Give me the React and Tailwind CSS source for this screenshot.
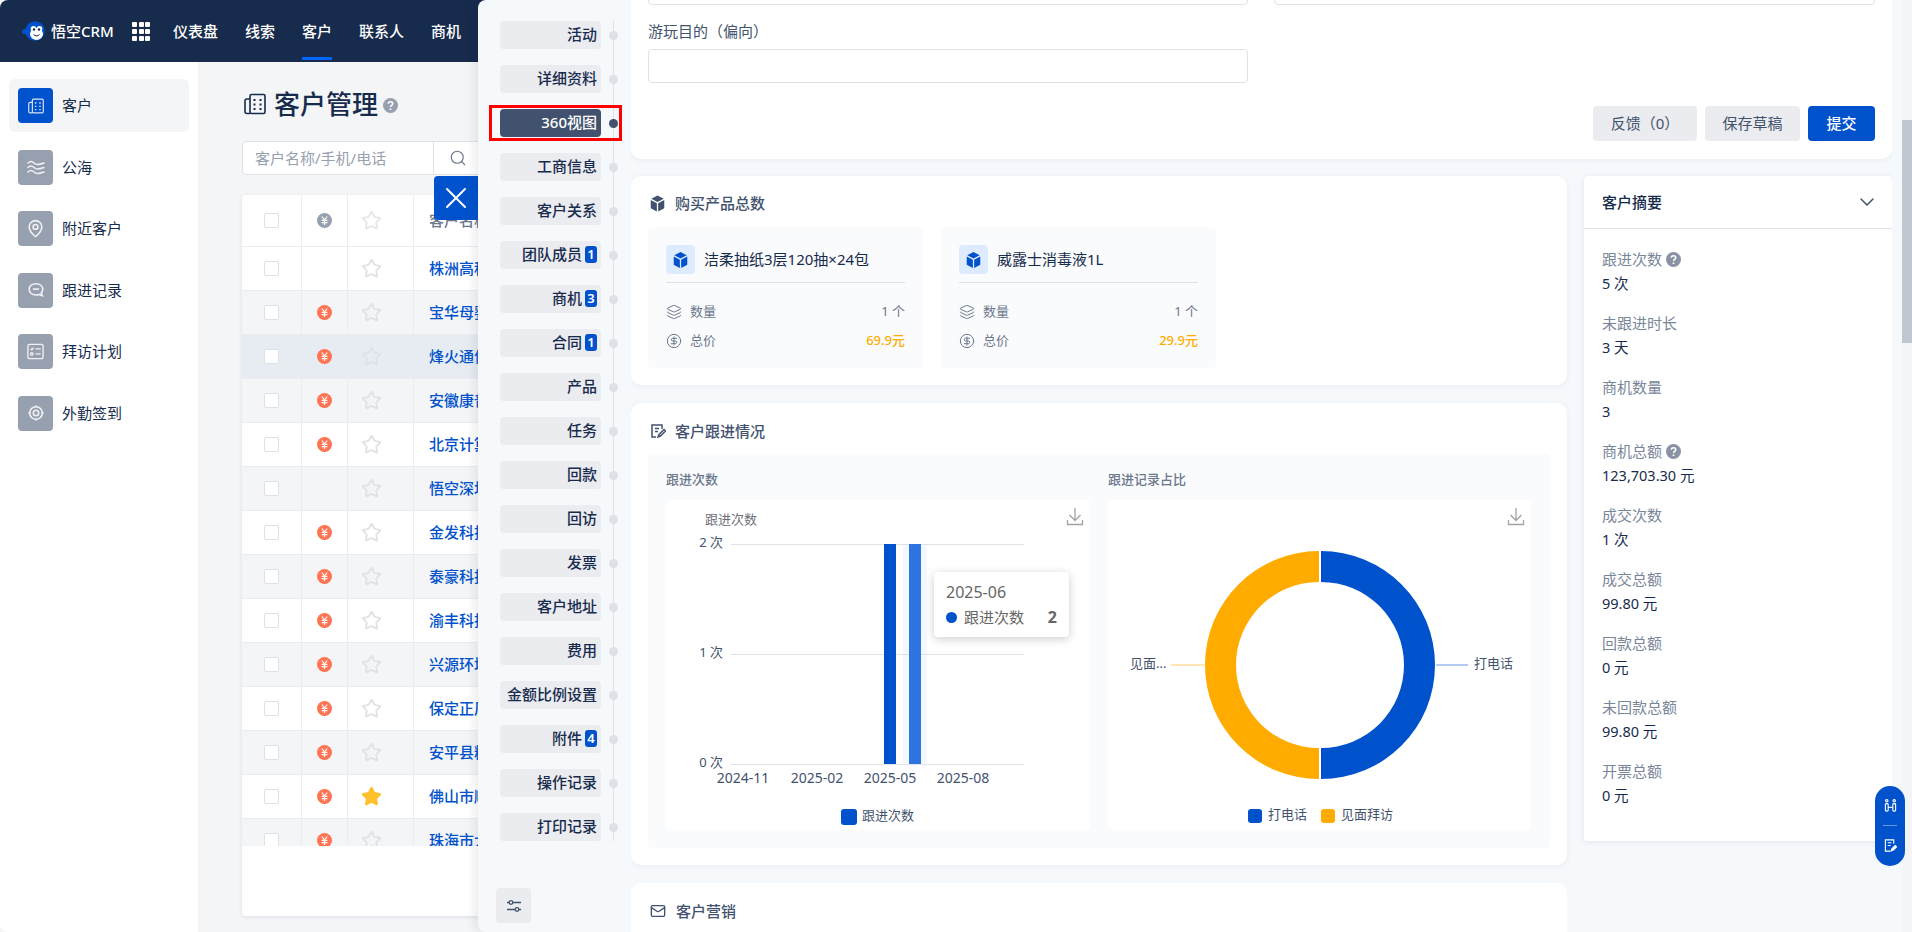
import { Search, X, ChevronDown, Mail, MapPin, Layers, CircleDollarSign, Star } from "lucide-react";

const navItems = ["仪表盘", "线索", "客户", "联系人", "商机"];

const anchors = [
  { name: "活动" },
  { name: "详细资料" },
  { name: "360视图", active: true },
  { name: "工商信息" },
  { name: "客户关系" },
  { name: "团队成员", badge: 1 },
  { name: "商机", badge: 3 },
  { name: "合同", badge: 1 },
  { name: "产品" },
  { name: "任务" },
  { name: "回款" },
  { name: "回访" },
  { name: "发票" },
  { name: "客户地址" },
  { name: "费用" },
  { name: "金额比例设置" },
  { name: "附件", badge: 4 },
  { name: "操作记录" },
  { name: "打印记录" },
];

const rows = [
  { name: "株洲高科技有限公司", bg: "bg-white" },
  { name: "宝华母婴用品公司", yuan: true, bg: "bg-[#f4f5f7]" },
  { name: "烽火通信科技公司", yuan: true, bg: "bg-[#e7ebf2]" },
  { name: "安徽康普有限公司", yuan: true, bg: "bg-[#f4f5f7]" },
  { name: "北京计算机公司", yuan: true, bg: "bg-white" },
  { name: "悟空深圳分公司", bg: "bg-[#f4f5f7]" },
  { name: "金发科技有限公司", yuan: true, bg: "bg-white" },
  { name: "泰豪科技有限公司", yuan: true, bg: "bg-[#f4f5f7]" },
  { name: "渝丰科技有限公司", yuan: true, bg: "bg-white" },
  { name: "兴源环境有限公司", yuan: true, bg: "bg-[#f4f5f7]" },
  { name: "保定正厂有限公司", yuan: true, bg: "bg-white" },
  { name: "安平县精工公司", yuan: true, bg: "bg-[#f4f5f7]" },
  { name: "佛山市顺德公司", yuan: true, star: true, bg: "bg-white" },
  { name: "珠海市大成公司", yuan: true, bg: "bg-[#f4f5f7]" },
];

const summary = [
  { label: "跟进次数", value: "5 次", help: true },
  { label: "未跟进时长", value: "3 天" },
  { label: "商机数量", value: "3" },
  { label: "商机总额", value: "123,703.30 元", help: true },
  { label: "成交次数", value: "1 次" },
  { label: "成交总额", value: "99.80 元" },
  { label: "回款总额", value: "0 元" },
  { label: "未回款总额", value: "99.80 元" },
  { label: "开票总额", value: "0 元" },
];

const products = [
  { name: "洁柔抽纸3层120抽×24包", price: "69.9元" },
  { name: "威露士消毒液1L", price: "29.9元" },
];

function BuildingIcon({ className }) {
  return (
    <svg viewBox="0 0 22 22" fill="none" stroke="currentColor" strokeWidth="1.6" className={className}>
      <rect x="6" y="1.5" width="15" height="19" rx="1.5" />
      <path d="M6 6H3a2 2 0 0 0-2 2v10.5a2 2 0 0 0 2 2h3" />
      <path d="M10.5 6v2M16.5 6v2M10.5 10.5v2M16.5 10.5v2M10.5 15v2M16.5 15v2" strokeWidth="2" />
    </svg>
  );
}

function WavesIcon({ className }) {
  return (
    <svg viewBox="0 0 18 15" fill="none" stroke="currentColor" strokeWidth="1.5" strokeLinecap="round" className={className}>
      <path d="M1 3c2-2 4-2 6 0s4 2 10 0" />
      <path d="M1 7.500c2-2 4-2 6 0s4 2 10 0" />
      <path d="M1 12c2-2 4-2 6 0s4 2 10 0" />
    </svg>
  );
}

function ChatIcon({ className }) {
  return (
    <svg viewBox="0 0 20 20" fill="none" stroke="currentColor" strokeWidth="1.8" className={className}>
      <path d="M10 3c4.4 0 7.5 2.600 7.500 6.200 0 1.600-.6 3-1.700 4l1.200 3-3.600-1.300c-1.100.4-2.300.6-3.400.6-4.400 0-7.500-2.600-7.500-6.300S5.600 3 10 3z" />
      <path d="M6.500 9h7" />
    </svg>
  );
}

function PlanIcon({ className }) {
  return (
    <svg viewBox="0 0 20 20" fill="none" stroke="currentColor" strokeWidth="1.4" className={className}>
      <rect x="2" y="2.500" width="16" height="15" rx="2" />
      <path d="M4.800 7l1.200 1.200L8 6M4.800 12.500a1.300 1.300 0 1 0 2.600 0 1.300 1.300 0 1 0-2.600 0M10 7.200h5.500M10 12.500h5.500" />
    </svg>
  );
}

function CheckinIcon({ className }) {
  return (
    <svg viewBox="0 0 20 20" fill="none" stroke="currentColor" className={className}>
      <circle cx="10" cy="10" r="7" strokeWidth="1.8" />
      <circle cx="10" cy="10" r="3" strokeWidth="1.8" />
      <path d="M10 1.500v1.500M10 17v1.500M1.500 10H3M17 10h1.500" strokeWidth="1.400" />
    </svg>
  );
}

function HelpDot({ className }) {
  return (
    <svg viewBox="0 0 15 15" className={className}>
      <circle cx="7.500" cy="7.500" r="7.500" fill="currentColor" />
      <path d="M5.300 5.800c0-1.300 1-2.100 2.200-2.100s2.200.8 2.200 2c0 1.600-2.200 1.600-2.200 3.300" fill="none" stroke="#fff" strokeWidth="1.500" />
      <circle cx="7.500" cy="11.200" r="0.900" fill="#fff" />
    </svg>
  );
}

const sideItems = [
  { name: "客户", Icon: BuildingIcon, size: "w-[16px] h-[16px]", active: true },
  { name: "公海", Icon: WavesIcon, size: "w-[18px] h-[15px]" },
  { name: "附近客户", Icon: MapPin, size: "w-[19px] h-[19px]" },
  { name: "跟进记录", Icon: ChatIcon, size: "w-[18px] h-[18px]" },
  { name: "拜访计划", Icon: PlanIcon, size: "w-[19px] h-[19px]" },
  { name: "外勤签到", Icon: CheckinIcon, size: "w-[18px] h-[18px]" },
];

function CubeIcon({ className }) {
  return (
    <svg viewBox="0 0 16 18" fill="currentColor" className={className}>
      <path d="M8 0.500l6.600 3.400L8 7.400 1.400 3.900z" />
      <path d="M0.800 5.200l6.500 3.500v8.700L0.800 14z" />
      <path d="M15.200 5.200L8.700 8.700v8.700l6.500-3.400z" />
    </svg>
  );
}

function YuanIcon({ grey }) {
  return (
    <svg viewBox="0 0 15 15" className="w-[15px] h-[15px]">
      <circle cx="7.500" cy="7.500" r="7.500" fill={grey ? "#97a0af" : "#ff7452"} />
      <path d="M4.800 3.500l2.700 3.400 2.700-3.400M4.600 7.400h5.800M4.600 9.600h5.800M7.500 6.900v5" fill="none" stroke="#fff" strokeWidth="1.200" />
    </svg>
  );
}

function Checkbox() {
  return <span className="block w-[15px] h-[15px] bg-white border border-[#dfe1e6] rounded-[2px]" />;
}

function Logo() {
  return (
    <svg viewBox="0 0 25 20" className="w-[25px] h-5">
      <circle cx="2.500" cy="10.500" r="2.500" fill="#0052cc" />
      <circle cx="13" cy="10" r="9.800" fill="#0052cc" />
      <circle cx="11.500" cy="7.800" r="2.800" fill="#fff" />
      <circle cx="17.500" cy="7.800" r="2.800" fill="#fff" />
      <ellipse cx="14.500" cy="13" rx="6.500" ry="6" fill="#fff" />
      <circle cx="12" cy="8.500" r="1.200" fill="#172b4d" />
      <circle cx="17" cy="8.500" r="1.200" fill="#172b4d" />
      <path d="M11.500 13.500c1.600 1.800 4.400 1.800 6 0" fill="none" stroke="#172b4d" strokeWidth="1" />
    </svg>
  );
}

function GridDots() {
  return (
    <div className="grid grid-cols-3 gap-[2px] w-[18px]">
      {Array.from({ length: 9 }).map((_, i) => (
        <span key={i} className="w-[5px] h-[5px] bg-white rounded-[1px]" />
      ))}
    </div>
  );
}

function DownloadIcon({ x, y }) {
  return (
    <g transform={`translate(${x} ${y})`} fill="none" stroke="#a3a3a3" strokeWidth="1.300">
      <path d="M8 0v12M2.500 7l5.500 5.500L13.500 7" />
      <path d="M0.500 12v4.500h15V12" />
    </g>
  );
}

function Header() {
  return (
    <header className="h-[62px] bg-[#172b4d] rounded-tl-lg flex items-center pl-[22px] text-white shrink-0">
      <Logo />
      <span className="ml-[4px] text-[15px] font-medium w-[67px]">悟空CRM</span>
      <div className="ml-[14px]">
        <GridDots />
      </div>
      <nav className="flex ml-[23px] gap-[27px] h-full">
        {navItems.map((n) => (
          <div key={n} className="relative flex items-center text-[15px] font-medium">
            {n}
            {n === "客户" && <span className="absolute left-0 right-0 bottom-[2px] h-[3px] bg-[#0065ff]" />}
          </div>
        ))}
      </nav>
    </header>
  );
}

function Sidebar() {
  return (
    <aside className="w-[198px] bg-white rounded-bl-lg pt-[17px] px-[9px] shrink-0 flex flex-col gap-[8.500px]">
      {sideItems.map(({ name, Icon, size, active }) => (
        <div key={name} className={`h-[53px] w-[180px] rounded-md flex items-center pl-[9px] gap-[9px] ${active ? "bg-[#f4f5f7]" : ""}`}>
          <span className={`w-[35px] h-[35px] rounded flex items-center justify-center text-white/85 ${active ? "bg-[#0052cc]" : "bg-[#97a0af]"}`}>
            <Icon className={size} />
          </span>
          <span className="text-[15px] text-[#172b4d]">{name}</span>
        </div>
      ))}
    </aside>
  );
}

function CustomerList() {
  return (
    <main className="flex-1 min-w-0 pl-[44px] overflow-hidden">
      <div className="flex items-center h-[38px] mt-[23px] text-[#172b4d]">
        <BuildingIcon className="w-[22px] h-[22px] ml-[2px]" />
        <span className="ml-2 text-[26px] font-medium">客户管理</span>
        <HelpDot className="ml-[5px] mt-[2px] w-[15px] h-[15px] text-[#97a0af]" />
      </div>
      <div className="mt-[18px] flex h-[34px] w-[300px] bg-white border border-[#dfe1e6] rounded">
        <span className="w-[191px] pl-3 text-[15px] leading-[32px] text-[#97a0af] border-r border-[#dfe1e6]">客户名称/手机/电话</span>
        <span className="w-12 flex items-center justify-center text-[#6b778c]">
          <Search className="w-[18px] h-[18px]" strokeWidth={1.500} />
        </span>
      </div>
      <div className="mt-[20px] h-[721px] w-[500px] bg-white rounded shadow-[0_1px_4px_rgba(9,30,66,0.1)]">
        <div className="h-[651px] overflow-hidden rounded-t">
          <div className="flex h-[52px] border-b border-[#ebecf0] items-center">
            <div className="w-[60px] h-full flex items-center justify-center border-r border-[#ebecf0]">
              <Checkbox />
            </div>
            <div className="w-[46px] h-full flex items-center justify-center border-r border-[#ebecf0]">
              <YuanIcon grey />
            </div>
            <div className="w-[66px] h-full flex items-center pl-[13px] border-r border-[#ebecf0]">
              <Star className="w-[21px] h-[21px] text-[#e4e6eb]" strokeWidth={2} />
            </div>
            <div className="pl-[15px] text-[15px] font-medium text-[#6b778c]">客户名称</div>
          </div>
          {rows.map((r) => (
            <div key={r.name} className={`flex h-[44px] items-center border-b border-[#ebecf0] ${r.bg}`}>
              <div className="w-[60px] h-full flex items-center justify-center border-r border-[#ebecf0]">
                <Checkbox />
              </div>
              <div className="w-[46px] h-full flex items-center justify-center border-r border-[#ebecf0]">
                {r.yuan && <YuanIcon />}
              </div>
              <div className="w-[66px] h-full flex items-center pl-[13px] border-r border-[#ebecf0]">
                {r.star ? (
                  <Star className="w-[21px] h-[21px] text-[#ffc02e] fill-[#ffc02e]" strokeWidth={2} />
                ) : (
                  <Star className="w-[21px] h-[21px] text-[#dfe1e6]" strokeWidth={2} />
                )}
              </div>
              <div className="pl-[15px] text-[15px] font-medium text-[#0052cc] whitespace-nowrap">{r.name}</div>
            </div>
          ))}
        </div>
      </div>
    </main>
  );
}

function AnchorNav() {
  return (
    <aside className="relative w-[153px] shrink-0 flex flex-col pt-[21px] pl-[22px] h-full">
      <span className="absolute left-[135px] top-[21px] h-[820px] w-px bg-[#dfe1e6]" />
      <div className="flex flex-col gap-4">
        {anchors.map((a) => (
          <div key={a.name} className="relative flex items-center h-7">
            <div className={`w-[101px] h-7 rounded flex items-center justify-end pr-[4px] pb-[1px] text-[15px] font-medium ${a.active ? "bg-[#42526e] text-white" : "bg-[#ebecf0] text-[#172b4d]"}`}>
              {a.name}
              {a.badge && (
                <span className="ml-[3px] min-w-[12px] h-[17px] px-[2px] rounded-[3px] bg-[#0052cc] text-white text-[13px] font-semibold flex items-center justify-center">
                  {a.badge}
                </span>
              )}
            </div>
            <span className={`ml-2 w-[9px] h-[9px] rounded-full z-10 ${a.active ? "bg-[#42526e]" : "bg-[#dfe1e6]"}`} />
          </div>
        ))}
      </div>
      <span className="absolute left-[11px] top-[105px] w-[133px] h-[36px] border-[3px] border-[#ff0000]" />
      <button className="mt-auto mb-[9px] -ml-[4px] w-[35px] h-[35px] rounded bg-[#ebecf0] flex items-center justify-center text-[#42526e]">
        <svg viewBox="0 0 16 14" fill="none" stroke="currentColor" strokeWidth="1.300" className="w-4 h-[14px]">
          <path d="M1 3.500h2M7 3.500h8M1 10.500h8M13 10.500h2" />
          <circle cx="5" cy="3.500" r="1.800" />
          <circle cx="11" cy="10.500" r="1.800" />
        </svg>
      </button>
    </aside>
  );
}

function TopForm() {
  return (
    <section className="h-[159px] bg-white rounded-b-[10px] px-[17px] shadow-[0_1px_6px_rgba(9,30,66,0.06)] shrink-0">
      <div className="flex gap-[26px] -mt-[29px]">
        <div className="w-[600px] h-[34px] border border-[#dfe1e6] rounded" />
        <div className="w-[601px] h-[34px] border border-[#dfe1e6] rounded" />
      </div>
      <div className="mt-[16px] h-5 text-[15px] leading-5 text-[#42526e]">游玩目的（偏向）</div>
      <div className="mt-[8px] w-[600px] h-[34px] border border-[#dfe1e6] rounded" />
      <div className="mt-[23px] flex justify-end gap-[8px] text-[15px]">
        <button className="w-[104px] h-[35px] rounded bg-[#ebecf0] text-[#42526e]">反馈（0）</button>
        <button className="w-[95px] h-[35px] rounded bg-[#ebecf0] text-[#42526e]">保存草稿</button>
        <button className="w-[67px] h-[35px] rounded bg-[#0052cc] text-white font-medium">提交</button>
      </div>
    </section>
  );
}

function ProductCard() {
  return (
    <section className="h-[209px] bg-white rounded-[10px] px-[17px] shadow-[0_1px_6px_rgba(9,30,66,0.06)]">
      <div className="h-[51px] flex items-center pt-[3px] text-[#42526e]">
        <CubeIcon className="ml-[2px] w-[15px] h-[17px]" />
        <span className="ml-[10px] text-[15px] font-medium">购买产品总数</span>
      </div>
      <div className="flex gap-[18px]">
        {products.map((p) => (
          <div key={p.name} className="w-[275px] h-[141px] rounded bg-[#fafbfc] px-[18px] pt-[18px]">
            <div className="flex items-center h-[29px] pb-[8px] border-b border-[#dfe1e6] box-content">
              <span className="w-[29px] h-[29px] rounded bg-[#deebff] flex items-center justify-center text-[#0052cc]">
                <CubeIcon className="w-[15px] h-[18px]" />
              </span>
              <span className="ml-[9px] text-[15px] text-[#172b4d]">{p.name}</span>
            </div>
            <div className="mt-[19px] flex items-center justify-between h-[20px] text-[13px] text-[#6b778c]">
              <span className="flex items-center gap-[8px]"><Layers className="w-[16px] h-[16px] text-[#6b778c]" strokeWidth={1.500} />数量</span>
              <span>1 个</span>
            </div>
            <div className="mt-[9px] flex items-center justify-between h-[20px] text-[13px] text-[#6b778c]">
              <span className="flex items-center gap-[8px]"><CircleDollarSign className="w-[16px] h-[16px]" strokeWidth={1.500} />总价</span>
              <span className="text-[#ffab00] font-medium">{p.price}</span>
            </div>
          </div>
        ))}
      </div>
    </section>
  );
}

function BarChart() {
  return (
    <div className="relative w-[424px] h-[330px] bg-white rounded">
      <svg viewBox="0 0 424 330" className="w-[424px] h-[330px]" fontFamily="'Noto Sans','Noto Sans CJK SC',sans-serif">
        <text x="39" y="24" fontSize="13" fill="#6e7079">跟进次数</text>
        <DownloadIcon x={401} y={8} />
        <rect x="237" y="44" width="24" height="220" fill="#f4f7fc" />
        {[44, 154, 264].map((y) => (
          <line key={y} x1="65" x2="358" y1={y + 0.5} y2={y + 0.5} stroke="#e0e2ea" />
        ))}
        <rect x="218" y="44" width="12" height="220" fill="#0052cc" />
        <rect x="243" y="44" width="12" height="220" fill="#2e75e2" />
        {[["2 次", 47], ["1 次", 157], ["0 次", 267]].map(([t, y]) => (
          <text key={t} x="57" y={y} fontSize="13" textAnchor="end" fill="#42526e">{t}</text>
        ))}
        {[["2024-11", 77], ["2025-02", 151], ["2025-05", 224], ["2025-08", 297]].map(([t, x]) => (
          <text key={t} x={x} y="283" fontSize="14" textAnchor="middle" fill="#42526e">{t}</text>
        ))}
        <rect x="175" y="309" width="16" height="16" rx="3" fill="#0052cc" />
        <text x="196" y="320" fontSize="13" fill="#42526e">跟进次数</text>
      </svg>
      <div className="absolute left-[268px] top-[72px] w-[135px] h-[65px] bg-white rounded shadow-[0_2px_10px_rgba(0,0,0,0.2)] px-[12px] pt-[8px] text-[#666]">
        <div className="h-[24px] leading-[24px] text-[16px]">2025-06</div>
        <div className="flex items-center h-[26px] text-[15px]">
          <span className="w-[11px] h-[11px] rounded-full bg-[#0052cc]" />
          <span className="ml-[7px]">跟进次数</span>
          <span className="ml-auto text-[16px] font-bold">2</span>
        </div>
      </div>
    </div>
  );
}

function DonutChart() {
  return (
    <div className="w-[423px] h-[330px] bg-white rounded">
      <svg viewBox="0 0 423 330" className="w-[423px] h-[330px]" fontFamily="'Noto Sans','Noto Sans CJK SC',sans-serif">
        <DownloadIcon x={400} y={8} />
        <path d="M213 51A114 114 0 0 1 213 279L213 248A83 83 0 0 0 213 82Z" fill="#0052cc" />
        <path d="M211 51A114 114 0 0 0 211 279L211 248A83 83 0 0 1 211 82Z" fill="#ffab00" />
        <line x1="328" x2="360" y1="165" y2="165" stroke="#0052cc" strokeOpacity="0.6" />
        <line x1="63" x2="96" y1="165" y2="165" stroke="#ffab00" strokeOpacity="0.6" />
        <text x="366" y="168" fontSize="13" fill="#42526e">打电话</text>
        <text x="22" y="168" fontSize="13" fill="#42526e">见面...</text>
        <rect x="140" y="309" width="14" height="14" rx="3" fill="#0052cc" />
        <text x="160" y="319" fontSize="13" fill="#42526e">打电话</text>
        <rect x="213" y="309" width="14" height="14" rx="3" fill="#ffab00" />
        <text x="233" y="319" fontSize="13" fill="#42526e">见面拜访</text>
      </svg>
    </div>
  );
}

function FollowCard() {
  return (
    <section className="h-[462px] bg-white rounded-[10px] px-[17px] shadow-[0_1px_6px_rgba(9,30,66,0.06)]">
      <div className="h-[51px] flex items-center pt-[5px] text-[#42526e]">
        <svg viewBox="0 0 16 16" fill="none" stroke="currentColor" strokeWidth="1.500" className="ml-[2px] w-[16px] h-[16px]">
          <path d="M12 6V2H2v12h4M5 5.500h4M5 8.500h3M8 14l1-2.500 5-5 1.500 1.500-5 5z" />
        </svg>
        <span className="ml-[9px] text-[15px] font-medium">客户跟进情况</span>
      </div>
      <div className="h-[394px] rounded bg-[#fafbfc] px-[18px]">
        <div className="flex gap-[18px]">
          <div>
            <div className="h-[46px] pt-[16px] text-[13px] leading-[18px] font-medium text-[#6b778c]">跟进次数</div>
            <BarChart />
          </div>
          <div>
            <div className="h-[46px] pt-[16px] text-[13px] leading-[18px] font-medium text-[#6b778c]">跟进记录占比</div>
            <DonutChart />
          </div>
        </div>
      </div>
    </section>
  );
}

function SummaryPanel() {
  return (
    <section className="w-[308px] h-[665px] bg-white rounded shadow-[0_1px_6px_rgba(9,30,66,0.08)] shrink-0">
      <div className="h-[53px] flex items-center justify-between pl-[18px] pr-[13px] border-b border-[#dfe1e6]">
        <span className="text-[15px] font-medium text-[#172b4d]">客户摘要</span>
        <ChevronDown className="w-6 h-6 text-[#42526e]" strokeWidth={1.500} />
      </div>
      <div className="pt-[18px] px-[18px] flex flex-col gap-4">
        {summary.map((s) => (
          <div key={s.label}>
            <div className="h-6 leading-6 text-[15px] text-[#7a869a] flex items-center">
              {s.label}
              {s.help && <HelpDot className="ml-[4px] w-[15px] h-[15px] text-[#8993a4]" />}
            </div>
            <div className="h-6 leading-6 text-[14.500px] text-[#172b4d]">{s.value}</div>
          </div>
        ))}
      </div>
    </section>
  );
}

export default function App() {
  return (
    <div className="relative w-[1912px] h-[932px] overflow-hidden flex flex-col bg-[#f4f5f7] font-['Noto_Sans','Noto_Sans_CJK_SC',sans-serif]">
      <Header />
      <div className="flex flex-1 min-h-0">
        <Sidebar />
        <CustomerList />
      </div>

      {/* close tab for the drawer */}
      <button className="absolute left-[434px] top-[176px] w-[44px] h-[44px] rounded-l bg-[#0052cc] flex items-center justify-center text-white">
        <X className="w-[36px] h-[36px]" strokeWidth={1.300} />
      </button>

      {/* drawer */}
      <div className="absolute left-[478px] top-0 bottom-0 right-0 flex bg-[#f5f9fc] rounded-l-lg shadow-[-4px_0_10px_rgba(9,30,66,0.08)]">
        <AnchorNav />
        <div className="flex-1 min-w-0 flex flex-col overflow-hidden">
          <TopForm />
          <div className="mt-[17px] flex gap-[17px]">
            <div className="w-[936px] flex flex-col gap-[18px] shrink-0">
              <ProductCard />
              <FollowCard />
              <section className="h-[120px] bg-white rounded-[10px] px-[17px]">
                <div className="h-[56px] flex items-center text-[#42526e]">
                  <Mail className="ml-[2px] w-[16px] h-[16px]" />
                  <span className="ml-[10px] text-[15px] font-medium">客户营销</span>
                </div>
              </section>
            </div>
            <SummaryPanel />
          </div>
        </div>
        <div className="w-[20px] shrink-0 flex">
          <div className="w-[10px]" />
          <div className="w-[10px] bg-[#f4f5f7]">
            <div className="mt-[120px] h-[223px] bg-[#c1c7d0]" />
          </div>
        </div>
      </div>

      {/* floating tools */}
      <div className="absolute left-[1875px] top-[786px] w-[30px] h-[80px] rounded-full bg-[#0052cc] flex flex-col items-center text-white">
        <div className="h-[39px] flex items-center">
          <svg viewBox="0 0 14 14" fill="none" stroke="currentColor" strokeWidth="1.200" className="w-[13px] h-[13px]">
            <circle cx="3" cy="2" r="1.300" />
            <circle cx="11" cy="2" r="1.300" />
            <rect x="1.500" y="5" width="3" height="8" rx="1" />
            <rect x="9.500" y="5" width="3" height="8" rx="1" />
            <path d="M4.500 9h5" />
          </svg>
        </div>
        <span className="w-[14px] h-px bg-white/40" />
        <div className="h-[39px] flex items-center">
          <svg viewBox="0 0 14 14" fill="none" stroke="currentColor" strokeWidth="1.200" className="w-[13px] h-[13px]">
            <path d="M10.500 5V1H1.500v12h5M4 4h4M4 7h3" />
            <path d="M7.500 13l1-2.500 3.500-3.500 1.500 1.500-3.500 3.500z" fill="currentColor" />
          </svg>
        </div>
      </div>
    </div>
  );
}
